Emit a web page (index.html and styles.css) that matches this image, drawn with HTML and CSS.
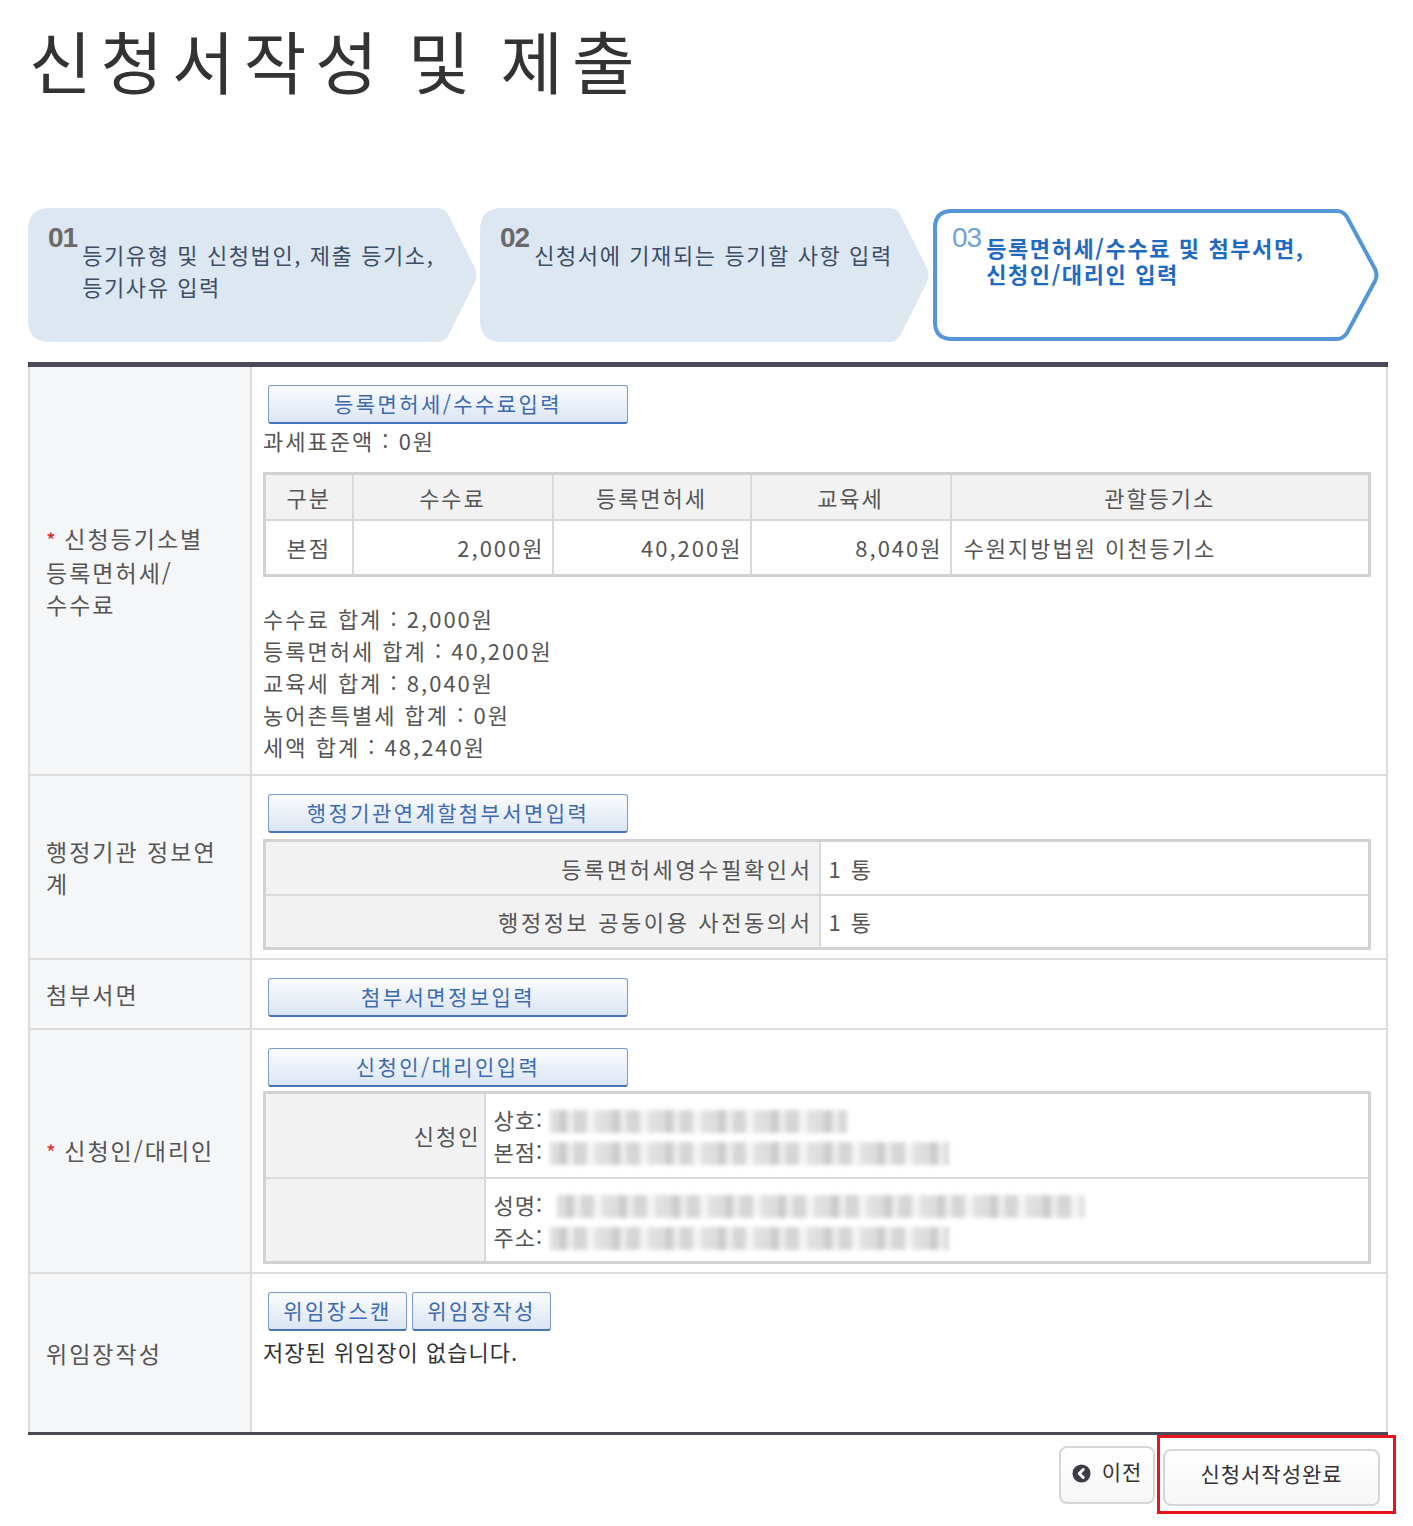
FILE: index.html
```html
<!DOCTYPE html>
<html lang="ko">
<head>
    <meta charset="UTF-8">
    <meta name="viewport" content="width=device-width, initial-scale=1.0">
    <title>신청서작성 및 제출</title>
    <link rel="stylesheet" href="styles.css">
</head>
<body>

    <div class="page">
        <h1 class="page-title">신청서작성 및 제출</h1>

        <ol class="steps">
            <li class="step">
                <svg class="step-bg" viewBox="0 0 450 134"><path d="M22,0 H410 Q416,0 420,6 L447,60 Q450,67 447,74 L420,128 Q416,134 410,134 H22 Q0,134 0,112 V22 Q0,0 22,0 Z"/></svg>
                <div class="step-body">
                    <span class="step-num">01</span>
                    <span class="step-text">등기유형 및 신청법인, 제출 등기소,<br>등기사유 입력</span>
                </div>
            </li>
            <li class="step">
                <svg class="step-bg" viewBox="0 0 450 134"><path d="M22,0 H410 Q416,0 420,6 L447,60 Q450,67 447,74 L420,128 Q416,134 410,134 H22 Q0,134 0,112 V22 Q0,0 22,0 Z"/></svg>
                <div class="step-body">
                    <span class="step-num">02</span>
                    <span class="step-text">신청서에 기재되는 등기할 사항 입력</span>
                </div>
            </li>
            <li class="step active">
                <svg class="step-bg" viewBox="0 0 450 134"><path d="M20,3 H405 Q411,3 415,9 L443,61 Q446,67 443,73 L415,125 Q411,131 405,131 H20 Q3,131 3,114 V20 Q3,3 20,3 Z"/></svg>
                <div class="step-body">
                    <span class="step-num">03</span>
                    <span class="step-text">등록면허세/수수료 및 첨부서면,<br>신청인/대리인 입력</span>
                </div>
            </li>
        </ol>

        <table class="form-table">
            <tr class="row-fee">
                <th><span class="req">*</span> 신청등기소별<br>등록면허세/<br>수수료</th>
                <td>
                    <button class="btn-input">등록면허세/수수료입력</button>
                    <p class="line">과세표준액 : 0원</p>
                    <table class="fee-table">
                        <colgroup>
                            <col class="c-kind">
                            <col class="c-amt">
                            <col class="c-amt2">
                            <col class="c-amt">
                            <col>
                        </colgroup>
                        <tr>
                            <th>구분</th>
                            <th>수수료</th>
                            <th>등록면허세</th>
                            <th>교육세</th>
                            <th>관할등기소</th>
                        </tr>
                        <tr>
                            <td class="center">본점</td>
                            <td>2,000원</td>
                            <td>40,200원</td>
                            <td>8,040원</td>
                            <td class="left">수원지방법원 이천등기소</td>
                        </tr>
                    </table>
                    <div class="sums">
                        <p>수수료 합계 : 2,000원</p>
                        <p>등록면허세 합계 : 40,200원</p>
                        <p>교육세 합계 : 8,040원</p>
                        <p>농어촌특별세 합계 : 0원</p>
                        <p>세액 합계 : 48,240원</p>
                    </div>
                </td>
            </tr>
            <tr class="row-admin">
                <th>행정기관 정보연<br>계</th>
                <td>
                    <button class="btn-input">행정기관연계할첨부서면입력</button>
                    <table class="doc-table">
                        <tr>
                            <th>등록면허세영수필확인서</th>
                            <td>1 통</td>
                        </tr>
                        <tr>
                            <th>행정정보 공동이용 사전동의서</th>
                            <td>1 통</td>
                        </tr>
                    </table>
                </td>
            </tr>
            <tr class="row-attach">
                <th>첨부서면</th>
                <td>
                    <button class="btn-input">첨부서면정보입력</button>
                </td>
            </tr>
            <tr class="row-person">
                <th><span class="req">*</span> 신청인/대리인</th>
                <td>
                    <button class="btn-input">신청인/대리인입력</button>
                    <table class="person-table">
                        <tr>
                            <th>신청인</th>
                            <td>
                                <p>상호: <span class="redact redact-a"></span></p>
                                <p>본점: <span class="redact redact-b"></span></p>
                            </td>
                        </tr>
                        <tr>
                            <th></th>
                            <td>
                                <p>성명: <span class="redact redact-c"></span></p>
                                <p>주소: <span class="redact redact-b"></span></p>
                            </td>
                        </tr>
                    </table>
                </td>
            </tr>
            <tr class="row-proxy">
                <th>위임장작성</th>
                <td>
                    <div class="btn-group">
                        <button class="btn-small">위임장스캔</button>
                        <button class="btn-small">위임장작성</button>
                    </div>
                    <p class="line notice">저장된 위임장이 없습니다.</p>
                </td>
            </tr>
        </table>

        <div class="page-actions">
            <button class="btn-nav btn-prev">
                <svg class="prev-icon" viewBox="0 0 20 20"><circle cx="10" cy="10" r="9.5"/><path d="M11.8 5.8 L7.6 10 L11.8 14.2"/></svg>
                이전
            </button>
            <span class="highlight">
                <button class="btn-nav btn-done">신청서작성완료</button>
            </span>
        </div>
    </div>

</body>
</html>
```

FILE: styles.css
```css
* {
    box-sizing: border-box;
}

body {
    margin: 0;
    font-family: "Noto Sans CJK KR", "Noto Sans", sans-serif;
    color: #555;
    background: #fff;
}

.page {
    width: 1413px;
    padding: 0 25px 20px 28px;
}

.page-title {
    margin: 26px 0 0 1px;
    font-size: 68px;
    line-height: 1;
    font-weight: normal;
    letter-spacing: 9px;
    word-spacing: -7px;
    color: #333;
}

/* Steps */
.steps {
    list-style: none;
    margin: 114px 0 0;
    padding: 0;
    display: flex;
    gap: 2px;
}

.step {
    display: grid;
    width: 450px;
    height: 134px;
}

.step > * {
    grid-area: 1 / 1;
}

.step-bg {
    width: 450px;
    height: 134px;
}

.step-bg path {
    fill: #dde7f2;
}

.step.active .step-bg path {
    fill: #fff;
    stroke: #5596d6;
    stroke-width: 4;
}

.step-body {
    display: flex;
    align-items: flex-start;
    padding: 16px 20px 0 20px;
}

.step-num {
    font-family: "Liberation Sans", Arial, sans-serif;
    font-size: 28px;
    font-weight: bold;
    line-height: 1;
    letter-spacing: -1px;
    color: #6a6a6a;
}

.step-text {
    margin: 14px 0 0 5px;
    font-size: 22px;
    line-height: 32px;
    letter-spacing: 1.6px;
    color: #3b4e66;
}

.step.active .step-num {
    font-weight: normal;
    color: #6ea2d8;
}

.step.active .step-text {
    margin-top: 10px;
    line-height: 26px;
    font-weight: bold;
    color: #1f6bc2;
}

/* Main form table */
.form-table {
    width: 100%;
    margin-top: 20px;
    border-collapse: collapse;
    border-top: 5px solid #4a4a58;
    border-bottom: 3px solid #4a4a58;
    border-left: 2px solid #dcdcdc;
    border-right: 2px solid #dcdcdc;
    font-size: 22px;
    letter-spacing: 2px;
}

.form-table > tbody > tr > th {
    width: 222px;
    padding: 0 10px 0 16px;
    background: #f5f6f8;
    border-right: 2px solid #dcdcdc;
    border-bottom: 2px solid #dcdcdc;
    text-align: left;
    vertical-align: middle;
    font-size: 23px;
    font-weight: normal;
    line-height: 32px;
    color: #555;
}

.form-table > tbody > tr > td {
    padding: 18px 15px 8px 11px;
    border-bottom: 2px solid #dcdcdc;
    vertical-align: top;
}

.req {
    color: #e0262b;
    font-size: 21px;
    letter-spacing: 0;
    vertical-align: -1px;
}

.row-attach > td {
    height: 70px;
}

.row-proxy > td {
    height: 160px;
}

.line {
    margin: 0;
    line-height: 32px;
}

.notice {
    margin-top: 4px;
    letter-spacing: 1px;
    color: #333;
}

.btn-input,
.btn-small {
    display: block;
    height: 39px;
    padding: 0 0 3px;
    border: 1px solid #7b9ccc;
    border-bottom: 2px solid #4674b8;
    border-radius: 3px;
    background: linear-gradient(#fbfcfe, #dbe5f3);
    font-family: inherit;
    font-size: 21px;
    letter-spacing: 2.4px;
    color: #3d6ab0;
    cursor: pointer;
}

.btn-input {
    width: 360px;
    margin-left: 5px;
}

.btn-group {
    display: flex;
    gap: 5px;
    margin-left: 5px;
}

.btn-small {
    width: 139px;
}

/* Fee table */
.fee-table,
.doc-table,
.person-table {
    width: 100%;
    border-collapse: collapse;
    border: 3px solid #d2d2d2;
}

.fee-table {
    margin: 16px 0 25px;
}

.c-kind { width: 88px; }
.c-amt { width: 200px; }
.c-amt2 { width: 198px; }

.fee-table th,
.fee-table td {
    border: 2px solid #d9d9d9;
    font-weight: normal;
    color: #555;
}

.fee-table th {
    height: 46px;
    background: #f2f2f2;
    text-align: center;
}

.fee-table td {
    height: 56px;
    padding: 0 7px;
    text-align: right;
}

.fee-table td.center {
    text-align: center;
}

.fee-table td.left {
    padding-left: 12px;
    text-align: left;
}

.sums {
    margin-bottom: 4px;
}

.sums p {
    margin: 0;
    line-height: 32px;
}

/* Admin documents */
.doc-table {
    margin-top: 6px;
}

.doc-table th,
.doc-table td {
    height: 54px;
    border: 2px solid #d9d9d9;
    font-weight: normal;
    color: #555;
}

.doc-table th {
    width: 555px;
    padding-right: 6px;
    background: #f2f2f2;
    text-align: right;
    letter-spacing: 2.6px;
}

.doc-table td {
    padding-left: 8px;
}

/* Applicant */
.person-table {
    margin-top: 4px;
}

.person-table th,
.person-table td {
    height: 85px;
    border: 2px solid #d9d9d9;
    font-weight: normal;
    color: #555;
}

.person-table th {
    width: 220px;
    padding-right: 3px;
    background: #f2f2f2;
    text-align: right;
}

.person-table td {
    padding: 7px 8px;
    letter-spacing: 1px;
}

.person-table p {
    margin: 0;
    line-height: 32px;
}

.redact {
    display: inline-block;
    height: 23px;
    vertical-align: -4px;
    background: repeating-linear-gradient(90deg, #d8d8d8 0 9px, #c4c4c4 9px 17px, #e8e8e8 17px 24px, #cfcfcf 24px 37px, #f2f2f2 37px 45px, #dcdcdc 45px 53px);
    filter: blur(2px);
    opacity: 0.85;
}

.redact-a { width: 297px; }
.redact-b { width: 399px; }
.redact-c { width: 528px; margin-left: 7px; }

/* Bottom actions */
.page-actions {
    display: flex;
    justify-content: flex-end;
    align-items: flex-start;
    margin-right: -8px;
}

.btn-nav {
    display: flex;
    align-items: center;
    justify-content: center;
    padding: 0 0 8px;
    border: 2px solid #d6d6d6;
    border-radius: 8px;
    background: linear-gradient(#fff, #f6f6f6);
    font-family: inherit;
    font-size: 21px;
    letter-spacing: 1px;
    color: #333;
    cursor: pointer;
}

.btn-prev {
    width: 96px;
    height: 58px;
    margin: 11px 2px 0 0;
    gap: 11px;
}

.prev-icon {
    width: 19px;
    height: 19px;
    margin-top: 6px;
}

.prev-icon circle {
    fill: #3c3c4c;
}

.prev-icon path {
    fill: none;
    stroke: #fff;
    stroke-width: 3.2;
    stroke-linecap: round;
    stroke-linejoin: round;
}

.highlight {
    display: inline-flex;
    border: 3px solid #e8141b;
    padding: 11px 13px 5px 3px;
}

.btn-done {
    width: 217px;
    height: 57px;
}
```
